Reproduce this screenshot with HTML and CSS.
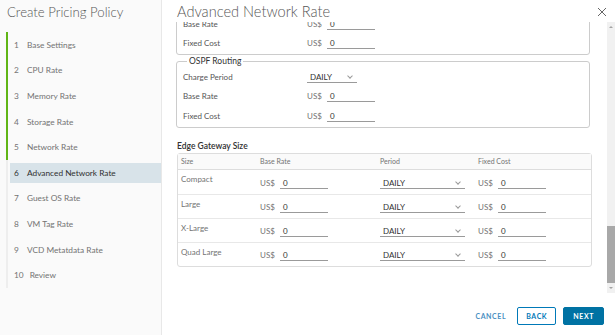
FILE: index.html
```html
<!DOCTYPE html>
<html lang="en">
  <head>
    <meta charset="UTF-8" />
    <meta name="viewport" content="width=device-width, initial-scale=1.0" />
    <title>Create Pricing Policy</title>
    <link rel="stylesheet" href="styles.css">
  </head>
  <body>
    <div class="wizard">
      <!-- 왼쪽 단계 목록 -->
      <div class="sidebar">
        <h1 class="wizard-title">Create Pricing Policy</h1>
        <ul class="steps">
          <li class="step done"><span class="num">1</span>Base Settings</li>
          <li class="step done"><span class="num">2</span>CPU Rate</li>
          <li class="step done"><span class="num">3</span>Memory Rate</li>
          <li class="step done"><span class="num">4</span>Storage Rate</li>
          <li class="step done"><span class="num">5</span>Network Rate</li>
          <li class="step active"><span class="num">6</span>Advanced Network Rate</li>
          <li class="step"><span class="num">7</span>Guest OS Rate</li>
          <li class="step"><span class="num">8</span>VM Tag Rate</li>
          <li class="step"><span class="num">9</span>VCD Metatdata Rate</li>
          <li class="step"><span class="num">10</span>Review</li>
        </ul>
      </div>

      <div class="main">
        <div class="header">
          <h2 class="page-title">Advanced Network Rate</h2>
          <svg class="close" width="10" height="10" viewBox="0 0 10 10">
            <path d="M1 1 L9 9 M9 1 L1 9" stroke="#666" stroke-width="1" fill="none" />
          </svg>
        </div>

        <div class="body">
          <div class="content">
            <div class="group cut">
              <div class="row">
                <span class="label">Base Rate</span>
                <span class="cur">US$</span><span class="input">0</span>
              </div>
              <div class="row">
                <span class="label">Fixed Cost</span>
                <span class="cur">US$</span><span class="input">0</span>
              </div>
            </div>

            <fieldset class="group">
              <legend>OSPF Routing</legend>
              <div class="row">
                <span class="label">Charge Period</span>
                <span class="select small">DAILY<span class="chev"></span></span>
              </div>
              <div class="row">
                <span class="label">Base Rate</span>
                <span class="cur">US$</span><span class="input">0</span>
              </div>
              <div class="row">
                <span class="label">Fixed Cost</span>
                <span class="cur">US$</span><span class="input">0</span>
              </div>
            </fieldset>

            <h3 class="section-title">Edge Gateway Size</h3>
            <div class="grid">
              <div class="grid-row grid-head">
                <span>Size</span><span>Base Rate</span><span>Period</span><span>Fixed Cost</span>
              </div>
              <div class="grid-row">
                <span class="size">Compact</span>
                <span class="cell"><span class="cur">US$</span><span class="input">0</span></span>
                <span class="cell"><span class="select">DAILY<span class="chev"></span></span></span>
                <span class="cell"><span class="cur">US$</span><span class="input">0</span></span>
              </div>
              <div class="grid-row">
                <span class="size">Large</span>
                <span class="cell"><span class="cur">US$</span><span class="input">0</span></span>
                <span class="cell"><span class="select">DAILY<span class="chev"></span></span></span>
                <span class="cell"><span class="cur">US$</span><span class="input">0</span></span>
              </div>
              <div class="grid-row">
                <span class="size">X-Large</span>
                <span class="cell"><span class="cur">US$</span><span class="input">0</span></span>
                <span class="cell"><span class="select">DAILY<span class="chev"></span></span></span>
                <span class="cell"><span class="cur">US$</span><span class="input">0</span></span>
              </div>
              <div class="grid-row">
                <span class="size">Quad Large</span>
                <span class="cell"><span class="cur">US$</span><span class="input">0</span></span>
                <span class="cell"><span class="select">DAILY<span class="chev"></span></span></span>
                <span class="cell"><span class="cur">US$</span><span class="input">0</span></span>
              </div>
            </div>
          </div>

          <!-- 스크롤바 -->
          <div class="scrollbar">
            <span class="arrow up"></span>
            <div class="track"><div class="thumb"></div></div>
            <span class="arrow down"></span>
          </div>
        </div>

        <div class="footer">
          <button class="btn flat">CANCEL</button>
          <button class="btn outline">BACK</button>
          <button class="btn primary">NEXT</button>
        </div>
      </div>
    </div>
  </body>
</html>
```

FILE: styles.css
```css
* {
  margin: 0;
  padding: 0;
  box-sizing: border-box;
}

body {
  width: 615px;
  height: 335px;
  overflow: hidden;
  background: white;
  font-family: Lato, "Open Sans", sans-serif;
  color: #565656;
}

.wizard {
  display: flex;
  height: 335px;
}

/* 사이드바 */
.sidebar {
  width: 162px;
  flex-shrink: 0;
  background: #fafafa;
  border-right: 1px solid #e8e8e8;
}

.wizard-title {
  font-size: 13.2px;
  font-weight: 300;
  color: #565656;
  line-height: 24px;
  padding-left: 7px;
}

.steps {
  list-style: none;
  margin-top: 8px;
}

.step {
  display: flex;
  align-items: center;
  height: 25.6px;
  margin-left: 6px;
  border-left: 2px solid #eeeeee;
  padding-left: 2px;
  font-size: 8.3px;
  color: #737373;
}

.step.done {
  border-left-color: #60b515;
}

.step .num {
  padding-left: 4px;
  padding-right: 6px;
  min-width: 17px;
  flex-shrink: 0;
}

.step.active {
  color: #313131;
  background: linear-gradient(#d8e3e9, #d8e3e9) content-box;
  padding-top: 3px;
  padding-bottom: 3px;
}

/* 메인 영역 */
.main {
  flex: 1;
  display: flex;
  flex-direction: column;
  min-width: 0;
}

.header {
  height: 22px;
  display: flex;
  align-items: center;
  justify-content: space-between;
  padding: 1px 8px 0 15px;
}

.page-title {
  font-size: 14.6px;
  font-weight: 300;
  color: #565656;
}

.body {
  display: flex;
  height: 271px;
}

.content {
  flex: 1;
  overflow: hidden;
  padding: 0 17px 0 14px;
}

.group {
  border: 1px solid #cccccc;
  border-radius: 3px;
  min-width: 0;
  padding: 0 0 1px 6px;
}

.group.cut {
  margin-top: -10.5px;
  padding-top: 1.5px;
}

legend {
  font-size: 8.5px;
  line-height: 12px;
  color: #313131;
  margin-left: 4px;
  padding: 0 2px;
}

.row {
  display: flex;
  align-items: center;
  height: 19.5px;
  font-size: 8px;
}

.label {
  width: 124px;
  color: #565656;
}

.cur {
  color: #737373;
  width: 20px;
}

.input {
  width: 48px;
  height: 12px;
  line-height: 12px;
  padding-left: 3px;
  color: #313131;
  border-bottom: 1px solid #9a9a9a;
}

.select {
  position: relative;
  width: 85px;
  height: 12px;
  line-height: 12px;
  padding-left: 3px;
  color: #313131;
  border-bottom: 1px solid #9a9a9a;
}

.select.small {
  width: 50px;
}

.chev {
  position: absolute;
  right: 5px;
  top: 3px;
  width: 4px;
  height: 4px;
  border-right: 1px solid #999;
  border-bottom: 1px solid #999;
  transform: rotate(45deg);
}

.section-title {
  font-size: 8.5px;
  font-weight: 600;
  color: #313131;
  line-height: 12px;
  margin-top: 12px;
  margin-left: 1px;
}

/* 표 */
.grid {
  margin-top: 1px;
  margin-left: 1px;
  margin-right: -2px;
  border: 1px solid #dddddd;
  border-radius: 3px;
  font-size: 8px;
}

.grid-row {
  display: grid;
  grid-template-columns: 79px 120px 98px 1fr;
  height: 24px;
  border-top: 1px solid #e8e8e8;
  padding-left: 3px;
}

.grid-head {
  height: 16px;
  border-top: none;
  border-bottom: 1px solid #dddddd;
  background: #fafafa;
  font-size: 7px;
  color: #737373;
  align-items: center;
}

.grid-head + .grid-row {
  border-top: none;
}

.size {
  padding-top: 4px;
  color: #737373;
}

.cell {
  display: flex;
  align-items: center;
  padding-top: 2px;
}

/* 스크롤바 */
.scrollbar {
  width: 8px;
  display: flex;
  flex-direction: column;
  background: #f1f1f1;
}

.arrow {
  height: 9px;
  display: block;
  position: relative;
}

.arrow::after {
  content: "";
  position: absolute;
  left: 2px;
  border-left: 2px solid transparent;
  border-right: 2px solid transparent;
}

.arrow.up::after {
  top: 4px;
  border-bottom: 2px solid #a3a3a3;
}

.arrow.down::after {
  top: 3px;
  border-top: 2px solid #a3a3a3;
}

.track {
  flex: 1;
  display: flex;
  flex-direction: column;
  justify-content: flex-end;
}

.thumb {
  height: 57px;
  background: #a8a8a8;
  margin-bottom: 1px;
}

/* 하단 버튼 */
.footer {
  flex: 1;
  display: flex;
  align-items: center;
  justify-content: flex-end;
  gap: 7px;
  padding: 4px 11px 0 0;
}

.btn {
  height: 18px;
  padding: 0 8px;
  font-family: Lato, sans-serif;
  font-size: 7px;
  font-weight: 700;
  letter-spacing: 0.6px;
  border-radius: 2px;
  border: 1px solid #0079b8;
  background: white;
  color: #0079b8;
  cursor: pointer;
}

.btn.flat {
  border-color: transparent;
  padding: 0 3px;
  color: #4a8fc2;
}

.btn.primary {
  background: #0072a3;
  border-color: #0072a3;
  color: white;
  padding: 0 9px;
}
```
